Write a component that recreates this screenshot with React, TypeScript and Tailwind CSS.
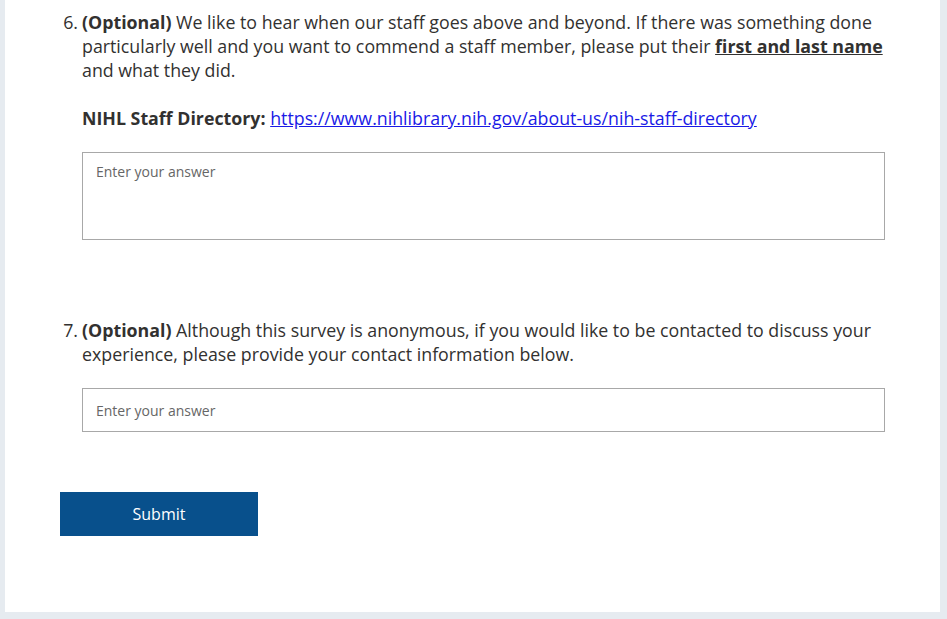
export default function App() {
  return (
    <div
      className="min-h-[619px] w-full bg-[#e6ebf0] pl-[5px] pr-[7px] pb-[7px]"
      style={{ fontFamily: '"Open Sans", "Noto Sans", sans-serif' }}
    >
      <div className="h-[612px] bg-white pt-[10px] pl-[54px]">
        {/* Question 6 */}
        <div className="flex text-[17.8px] leading-[24px] text-[#323130]">
          <span className="w-[19px] shrink-0 text-right">6.</span>
          <div className="ml-[4px] w-[803px]">
            <p className="whitespace-nowrap">
              <span className="font-bold">(Optional)</span> We like to hear when our staff goes above and beyond. If
              there was something done
              <br />
              particularly well and you want to commend a staff member, please put their{" "}
              <span className="font-bold underline">first and last name</span>
              <br />
              and what they did.
            </p>
            <p className="mt-[24px]">
              <span className="font-bold">NIHL Staff Directory:</span>{" "}
              <a href="#" className="text-[#1a1ae6] underline">
                https://www.nihlibrary.nih.gov/about-us/nih-staff-directory
              </a>
            </p>
            <textarea
              placeholder="Enter your answer"
              className="mt-[22px] block h-[88px] w-[803px] resize-none border border-[#a8a8a8] px-[13px] py-[9px] text-[14px] leading-[20px] text-[#323130] placeholder:text-[#666666] focus:outline-none"
            />
          </div>
        </div>

        {/* Question 7 */}
        <div className="mt-[78px] flex text-[17.8px] leading-[24px] text-[#323130]">
          <span className="w-[19px] shrink-0 text-right">7.</span>
          <div className="ml-[4px] w-[803px]">
            <p className="whitespace-nowrap">
              <span className="font-bold">(Optional)</span> Although this survey is anonymous, if you would like to be
              contacted to discuss your
              <br />
              experience, please provide your contact information below.
            </p>
            <input
              type="text"
              placeholder="Enter your answer"
              className="mt-[22px] block h-[44px] w-[803px] border border-[#a8a8a8] px-[13px] text-[14px] text-[#323130] placeholder:text-[#666666] focus:outline-none"
            />
          </div>
        </div>

        <button className="mt-[60px] ml-[1px] h-[44px] w-[198px] bg-[#08508c] text-[16px] text-white">Submit</button>
      </div>
    </div>
  );
}
